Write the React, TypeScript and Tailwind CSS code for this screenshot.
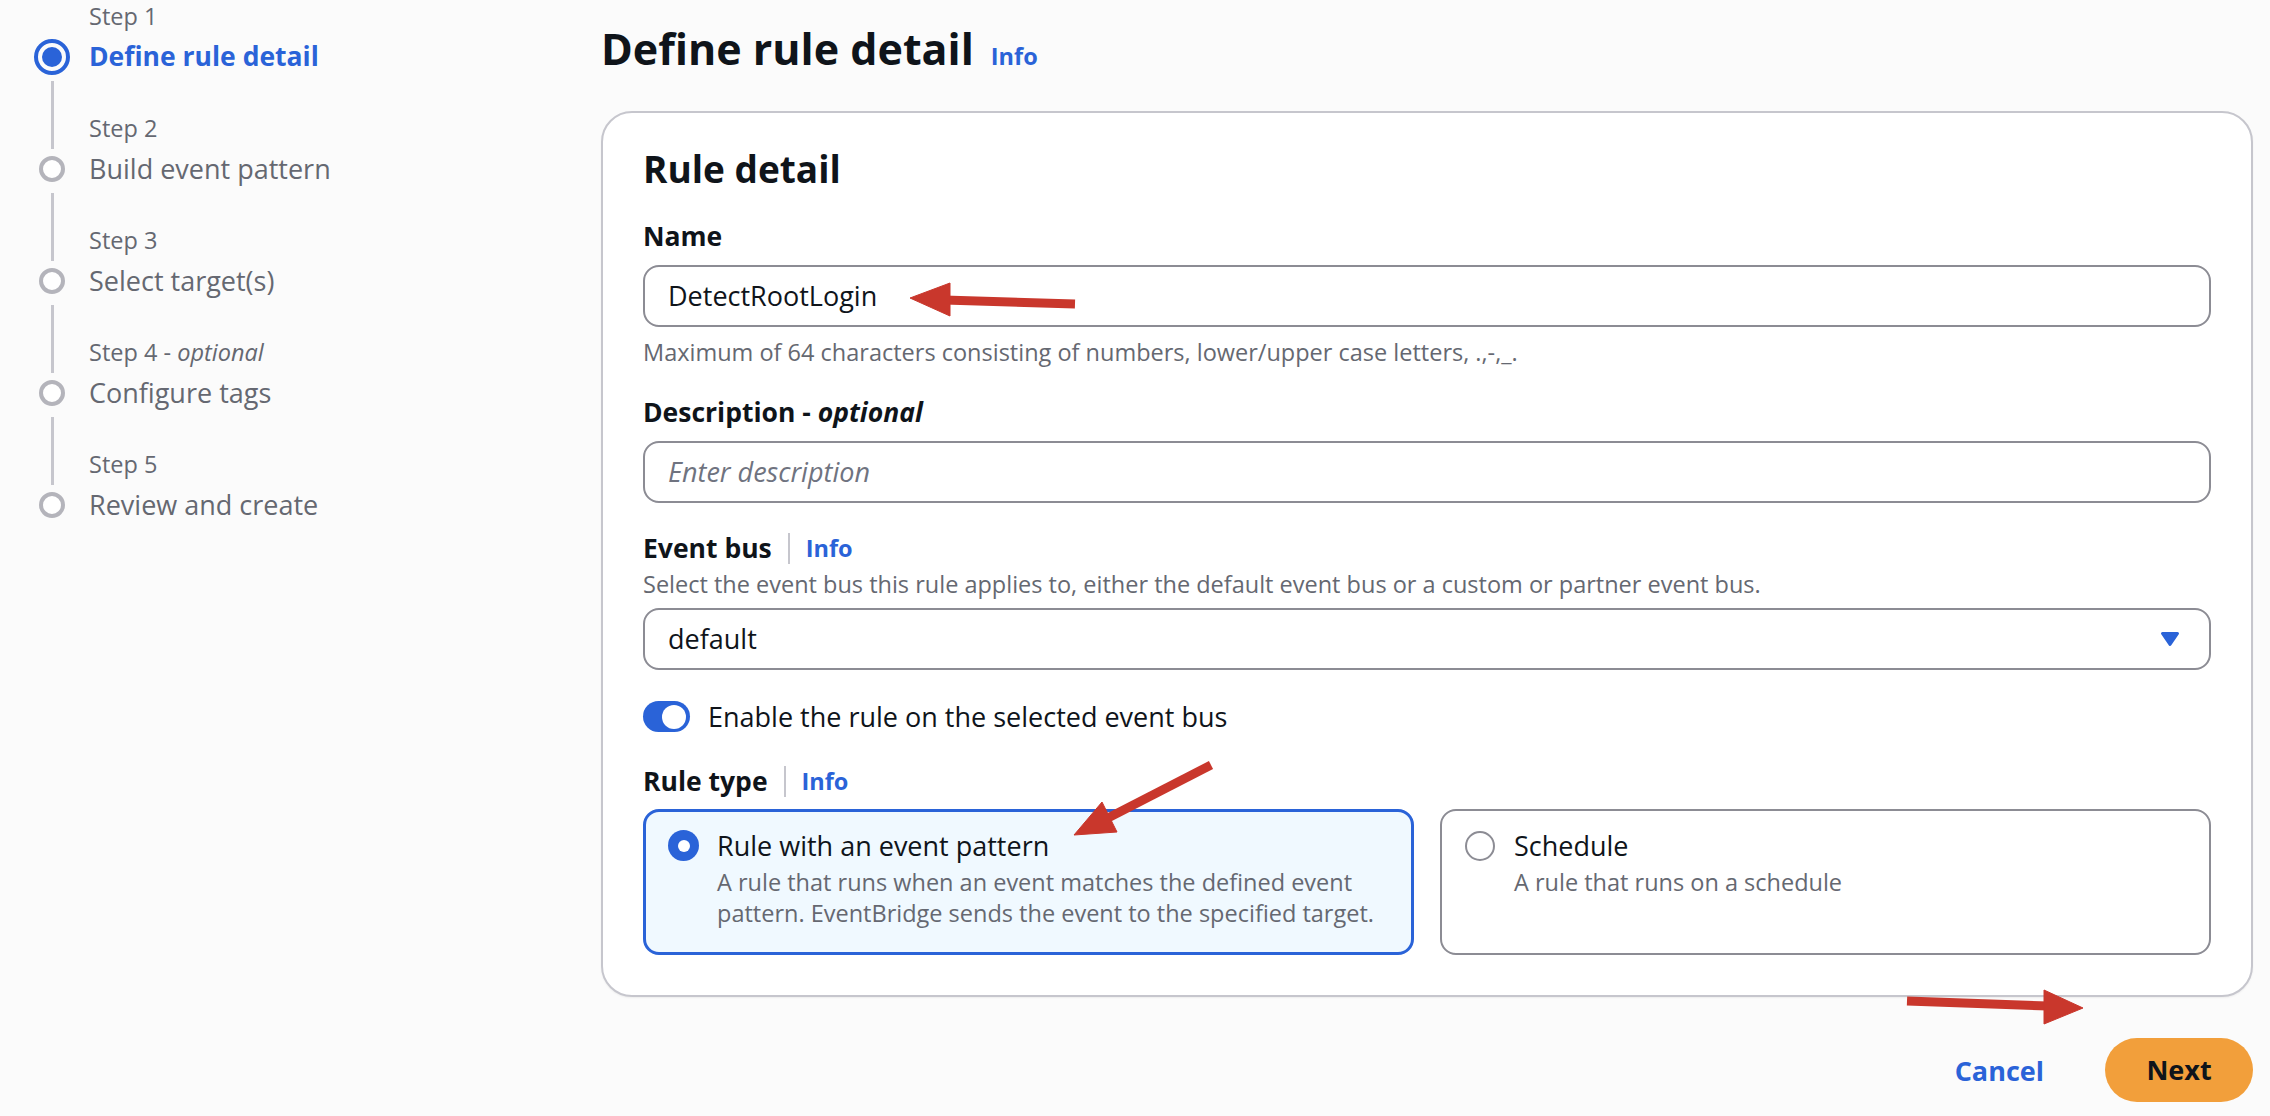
const BLUE = "#2a63d8";

type StepProps = {
  n: number;
  title: string;
  active?: boolean;
  last?: boolean;
  optional?: boolean;
};

const Step = ({ n, title, active, last, optional }: StepProps) => {
  return (
    <div className="flex">
      <div className="w-[36px] flex flex-col items-center">
        <div className="h-[36px] flex justify-center">
          {n > 1 && <div className="w-[3px] h-full bg-[#c6c6cd]" />}
        </div>
        <div className="h-[39px] flex items-center justify-center">
          {active ? (
            <div className="w-[36px] h-[36px] rounded-full border-[4px] border-[#2a63d8] flex items-center justify-center">
              <div className="w-[20px] h-[20px] rounded-full bg-[#2a63d8]" />
            </div>
          ) : (
            <div className="w-[26px] h-[26px] rounded-full border-[4px] border-[#b4b4bb] bg-white" />
          )}
        </div>
        {!last && <div className="flex-1 w-[3px] mt-[5px] bg-[#c6c6cd]" />}
      </div>
      <div className={`ml-[19px] ${last ? "" : "pb-[37px]"}`}>
        <div className="h-[36px] text-[23.5px] leading-[31px] text-[#656871]">
          Step {n}
          {optional && (
            <>
              {" - "}
              <i>optional</i>
            </>
          )}
        </div>
        <div
          className={
            active
              ? "text-[26.5px] leading-[39px] font-bold text-[#2a63d8]"
              : "text-[27px] leading-[39px] text-[#656871]"
          }
        >
          {title}
        </div>
      </div>
    </div>
  );
};

const InfoLink = () => (
  <span className="text-[23.5px] leading-[31px] font-bold text-[#2a63d8]">Info</span>
);

const LabelWithInfo = ({ label }: { label: string }) => (
  <div className="flex items-center h-[39px]">
    <span className="text-[26.5px] leading-[39px] font-bold text-[#0f141a]">{label}</span>
    <div className="w-[2px] h-[31px] bg-[#c6c6cd] mx-[16px]" />
    <InfoLink />
  </div>
);

export default function App() {
  return (
    <div
      className="relative w-[2270px] h-[1116px] overflow-hidden flex bg-[#fbfbfb] text-[#0f141a] font-['Open_Sans',sans-serif]"
    >
      {/* wizard steps */}
      <nav className="w-[601px] shrink-0 pl-[34px] pt-[1px]">
        <Step n={1} title="Define rule detail" active />
        <Step n={2} title="Build event pattern" />
        <Step n={3} title="Select target(s)" />
        <Step n={4} title="Configure tags" optional />
        <Step n={5} title="Review and create" last />
      </nav>

      <main className="flex-1 pr-[17px] flex flex-col">
        <div className="mt-[20px] h-[58px] flex items-baseline gap-[17px]">
          <h1 className="text-[43px] leading-[58px] font-bold text-[#0f141a]">Define rule detail</h1>
          <InfoLink />
        </div>

        <section className="mt-[33px] border-2 border-[#c6c6cd] rounded-[31px] bg-white px-[40px] pt-[33px] pb-[40px] shadow-[0_1px_2px_rgba(0,0,0,0.06)]">
          <h2 className="text-[37px] leading-[46px] font-bold">Rule detail</h2>

          {/* Name */}
          <div className="mt-[25px] text-[26.5px] leading-[39px] font-bold">Name</div>
          <div className="mt-[9px] h-[62px] border-2 border-[#8c8c94] rounded-[16px] px-[23px] flex items-center bg-white text-[27px]">
            DetectRootLogin
          </div>
          <div className="mt-[10px] text-[23.5px] leading-[31px] text-[#656871]">
            Maximum of 64 characters consisting of numbers, lower/upper case letters, .,-,_.
          </div>

          {/* Description */}
          <div className="mt-[25px] text-[26.5px] leading-[39px] font-bold">
            Description - <i>optional</i>
          </div>
          <div className="mt-[9px] h-[62px] border-2 border-[#8c8c94] rounded-[16px] px-[23px] flex items-center bg-white text-[27px] italic text-[#6f7380]">
            Enter description
          </div>

          {/* Event bus */}
          <div className="mt-[26px]">
            <LabelWithInfo label="Event bus" />
          </div>
          <div className="mt-[1px] text-[23.5px] leading-[31px] text-[#656871]">
            Select the event bus this rule applies to, either the default event bus or a custom or partner event bus.
          </div>
          <div className="mt-[8px] h-[62px] border-2 border-[#8c8c94] rounded-[16px] pl-[23px] pr-[29px] flex items-center justify-between bg-white text-[27px]">
            <span>default</span>
            <svg width="20" height="16" viewBox="0 0 20 16">
              <path d="M2.5 2.5 H17.5 L10 13.5 Z" fill={BLUE} stroke={BLUE} strokeWidth="3" strokeLinejoin="round" />
            </svg>
          </div>

          {/* Toggle */}
          <div className="mt-[27px] h-[39px] flex items-center gap-[18px]">
            <div className="w-[47px] h-[31px] rounded-full bg-[#2a63d8] flex items-center justify-end pr-[4px]">
              <div className="w-[24px] h-[24px] rounded-full bg-white" />
            </div>
            <span className="text-[27px] leading-[39px]">Enable the rule on the selected event bus</span>
          </div>

          {/* Rule type */}
          <div className="mt-[26px]">
            <LabelWithInfo label="Rule type" />
          </div>
          <div className="mt-[8px] grid grid-cols-2 gap-[26px]">
            <div className="border-[3px] border-[#2a63d8] bg-[#f0f9ff] rounded-[16px] pl-[22px] pt-[14px] pb-[23px] flex gap-[18px]">
              <div className="h-[39px] flex items-center shrink-0">
                <div className="w-[31px] h-[31px] rounded-full bg-[#2a63d8] flex items-center justify-center">
                  <div className="w-[12px] h-[12px] rounded-full bg-white" />
                </div>
              </div>
              <div>
                <div className="text-[27px] leading-[39px]">Rule with an event pattern</div>
                <div className="mt-[2px] text-[23.5px] leading-[31px] text-[#656871] whitespace-nowrap">
                  <div>A rule that runs when an event matches the defined event</div>
                  <div>pattern. EventBridge sends the event to the specified target.</div>
                </div>
              </div>
            </div>
            <div className="border-2 border-[#8c8c94] bg-white rounded-[16px] pl-[23px] pt-[15px] pb-[24px] flex gap-[19px]">
              <div className="h-[39px] flex items-center shrink-0">
                <div className="w-[30px] h-[30px] rounded-full border-2 border-[#8c8c94] bg-white" />
              </div>
              <div>
                <div className="text-[27px] leading-[39px]">Schedule</div>
                <div className="mt-[2px] text-[23.5px] leading-[31px] text-[#656871]">
                  A rule that runs on a schedule
                </div>
              </div>
            </div>
          </div>
        </section>

        <div className="mt-[41px] flex justify-end items-center gap-[61px]">
          <span className="text-[27px] leading-[39px] font-bold text-[#2a63d8]">Cancel</span>
          <button className="h-[64px] w-[148px] rounded-full bg-[#f29f3b] text-[27px] font-bold text-[#0f141a]">
            Next
          </button>
        </div>
      </main>

      {/* annotation arrows */}
      <svg
        className="absolute top-0 left-0 pointer-events-none"
        width="2270"
        height="1116"
        viewBox="0 0 2270 1116"
      >
        <g fill="#c9372c" stroke="#c9372c">
          <line x1="944" y1="300" x2="1075" y2="304" strokeWidth="9" />
          <polygon points="910,298 950,283 950,316" strokeWidth="1" />
          <line x1="1211" y1="765" x2="1106" y2="819" strokeWidth="9" />
          <polygon points="1074,835 1117,832 1102,802" strokeWidth="1" />
          <line x1="1907" y1="1001" x2="2048" y2="1006" strokeWidth="9" />
          <polygon points="2083,1008 2044,990 2044,1024" strokeWidth="1" />
        </g>
      </svg>
    </div>
  );
}
